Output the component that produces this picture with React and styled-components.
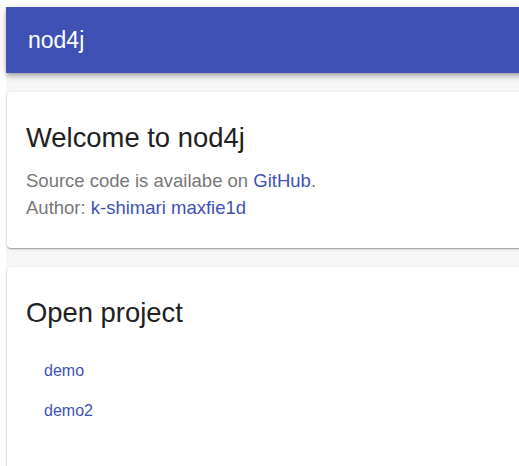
import React from "react";
import styled, { createGlobalStyle } from "styled-components";

const Global = createGlobalStyle`
  html, body { margin: 0; padding: 0; }
  body {
    background: #ffffff;
    font-family: "Liberation Sans", Arial, sans-serif;
    overflow: hidden;
  }
`;

const Frame = styled.div`
  padding: 7px 0 0 6px;
  width: 560px;
`;

const Page = styled.div`
  background: #f6f6f6;
  min-height: 470px;
`;

const AppBar = styled.header`
  height: 66px;
  background: #3f51b5;
  color: #fff;
  display: flex;
  align-items: center;
  padding-left: 22px;
  box-shadow: 0 2px 4px -1px rgba(0,0,0,.2), 0 4px 5px 0 rgba(0,0,0,.14), 0 1px 10px 0 rgba(0,0,0,.12);
  position: relative;
  z-index: 1;
`;

const Brand = styled.h1`
  margin: 0;
  font-size: 23px;
  font-weight: 400;
`;

const Main = styled.main`
  padding: 19px 0 0 1px;
  display: flex;
  flex-direction: column;
  gap: 19px;
`;

const Card = styled.section`
  background: #fff;
  border-radius: 4px;
  box-shadow: 0 1px 3px 0 rgba(0,0,0,.2), 0 1px 1px 0 rgba(0,0,0,.14), 0 2px 1px -1px rgba(0,0,0,.12);
  padding: ${p => p.$pad};
`;

const Title = styled.h2`
  margin: 0;
  font-size: 27.4px;
  font-weight: 400;
  color: #212121;
  line-height: 32px;
`;

const Text = styled.p`
  margin: 0;
  font-size: 18.5px;
  line-height: 27px;
  color: #777;
`;

const Link = styled.a`
  color: #3f51b5;
  text-decoration: none;
`;

const Intro = styled.div`
  margin-top: 13px;
`;

const List = styled.ul`
  list-style: none;
  margin: 32px 0 0;
  padding: 0 0 0 18px;
  display: flex;
  flex-direction: column;
  gap: 20px;
`;

const Item = styled.li`
  font-size: 16px;
  line-height: 20px;
`;

export default function App() {
  return (
    <>
      <Global />
      <Frame>
        <Page>
          <AppBar>
            <Brand>nod4j</Brand>
          </AppBar>
          <Main>
            <Card $pad="30px 19px 27px">
              <Title>Welcome to nod4j</Title>
              <Intro>
                <Text>
                  Source code is availabe on <Link href="#">GitHub</Link>.
                </Text>
                <Text>
                  Author: <Link href="#">k-shimari</Link> <Link href="#">maxfie1d</Link>
                </Text>
              </Intro>
            </Card>
            <Card $pad="30px 19px 60px">
              <Title>Open project</Title>
              <List>
                <Item><Link href="#">demo</Link></Item>
                <Item><Link href="#">demo2</Link></Item>
              </List>
            </Card>
          </Main>
        </Page>
      </Frame>
    </>
  );
}
